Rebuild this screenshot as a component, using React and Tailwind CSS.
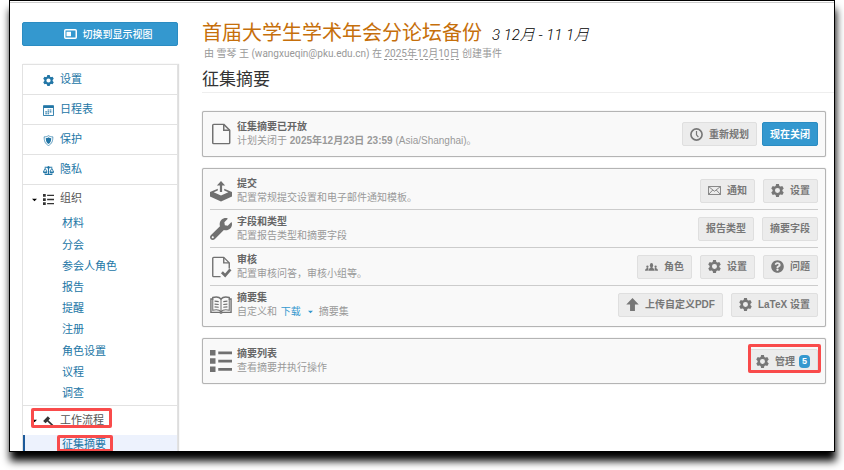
import { FaBalanceScale, FaQuestionCircle, FaWrench } from 'react-icons/fa';

const GEAR_ANGLES = [0, 60, 120, 180, 240, 300];

function GearIcon({ className }) {
  return (
    <svg viewBox="0 0 24 24" className={className} fill="none" stroke="currentColor" aria-hidden="true">
      <circle cx="12" cy="12" r="6.8" strokeWidth="4.4" />
      {GEAR_ANGLES.map((angle) => (
        <path key={angle} d="M8.4 4.5 L9.4 .2 H14.6 L15.6 4.5 Z" fill="currentColor" stroke="none" transform={`rotate(${angle} 12 12)`} />
      ))}
    </svg>
  );
}

function DisplayIcon({ className }) {
  return (
    <svg viewBox="0 0 26 20" className={className} aria-hidden="true">
      <rect x="1.5" y="1.5" width="23" height="17" rx="2" fill="none" stroke="currentColor" strokeWidth="3" />
      <rect x="5" y="5.5" width="9" height="9" fill="currentColor" />
    </svg>
  );
}

function CalendarIcon({ className }) {
  return (
    <svg viewBox="0 0 24 24" className={className} fill="none" stroke="currentColor" aria-hidden="true">
      <path d="M1 1.500H23V23H1Z" strokeWidth="2" />
      <path d="M1 4H23" strokeWidth="5" />
      <path d="M10 11H20M5 15H20M5 19H14" strokeWidth="2.200" strokeDasharray="3.500 1.300" />
    </svg>
  );
}

function ShieldIcon({ className }) {
  return (
    <svg viewBox="0 0 24 24" className={className} aria-hidden="true">
      <path d="M12 1.500C9 3.500 6 4 2.500 4C2.500 12 4 19 12 23C20 19 21.500 12 21.500 4C18 4 15 3.500 12 1.500Z" fill="none" stroke="currentColor" strokeWidth="1.500" />
      <path d="M12 5C10 6.300 8.500 6.800 6 7C6.200 12.500 7.500 17 12 19.800C16.500 17 17.800 12.500 18 7C15.500 6.800 14 6.300 12 5Z" fill="currentColor" />
    </svg>
  );
}

function ListIcon({ className }) {
  return (
    <svg viewBox="0 0 24 24" className={className} fill="currentColor" aria-hidden="true">
      <path d="M0 0H6V6H0ZM0 9H6V15H0ZM0 18H6V24H0ZM9 1.500H24V4.500H9ZM9 10.500H24V13.500H9ZM9 19.500H24V22.500H9Z" />
    </svg>
  );
}

function GavelIcon({ className }) {
  return (
    <svg viewBox="0 0 24 24" className={className} fill="none" stroke="currentColor" aria-hidden="true">
      <path d="M3 13.500L13 3" strokeWidth="7" />
      <path d="M9 9L22 21.500" strokeWidth="3.600" strokeLinecap="round" />
    </svg>
  );
}

function FileIcon({ className }) {
  return (
    <svg viewBox="0 0 22 24" className={className} fill="none" stroke="currentColor" strokeWidth="1.600" aria-hidden="true">
      <path d="M3 1.500H14L20.500 8V21.500Q20.500 22.500 19.500 22.500H3Q2 22.500 2 21.500V2.500Q2 1.500 3 1.500Z" strokeLinejoin="round" />
      <path d="M14 1.500V8H20.500" />
    </svg>
  );
}

function FileCheckIcon({ className }) {
  return (
    <svg viewBox="0 0 22 24" className={className} fill="none" stroke="currentColor" strokeWidth="1.500" aria-hidden="true">
      <path d="M10.500 22.500H3Q2 22.500 2 21.500V2.500Q2 1.500 3 1.500H14L20 7.500V13.500" strokeLinejoin="round" />
      <path d="M14 1.500V7.500H20" />
      <path d="M12 17.800L15.500 21.300L21.300 14.500" strokeWidth="3" />
    </svg>
  );
}

function SubmitIcon({ className }) {
  return (
    <svg viewBox="0 0 24 24" className={className} fill="currentColor" aria-hidden="true">
      <path d="M12 1L16.500 6H13.200V13H10.800V6H7.500Z" />
      <path d="M8.500 9.500L0 13V18L12 23.500L24 18V13L15.500 9.500V11.500L20 13.400L12 17L4 13.400L8.500 11.500Z" />
    </svg>
  );
}

function BookIcon({ className }) {
  return (
    <svg viewBox="0 0 24 20" className={className} fill="none" stroke="currentColor" strokeWidth="1.500" aria-hidden="true">
      <path d="M12 3.500C10 1 6 1 3 1.800V3.500H1V18H10.500L12 19L13.500 18H23V3.500H21V1.800C18 1 14 1 12 3.500Z" />
      <path d="M12 3.500V18M3 3.500V15.800C6 15 10 15 12 17.500C14 15 18 15 21 15.800V3.500" strokeWidth="1.100" />
      <path d="M5 5.800L9.500 6.300M5 9L9.500 9.500M5 12L9.500 12.500M19 5.800L14.500 6.300M19 9L14.500 9.500M19 12L14.500 12.500" strokeWidth="1.200" />
    </svg>
  );
}

function ClockIcon({ className }) {
  return (
    <svg viewBox="0 0 24 24" className={className} fill="none" stroke="currentColor" aria-hidden="true">
      <circle cx="12" cy="12" r="10.300" strokeWidth="3" />
      <path d="M12 5.500V12.500L15.500 17" strokeWidth="2.200" />
    </svg>
  );
}

function MailIcon({ className }) {
  return (
    <svg viewBox="0 0 26 18" className={className} fill="none" stroke="currentColor" strokeWidth="1.700" aria-hidden="true">
      <path d="M1 1H25V17H1ZM1 1L13 10.500L25 1M1 17L9.500 8M25 17L16.500 8" />
    </svg>
  );
}

function RolesIcon({ className }) {
  return (
    <svg viewBox="0 0 26 18" className={className} fill="currentColor" aria-hidden="true">
      <ellipse cx="13" cy="6.500" rx="3.200" ry="4.500" />
      <path d="M6.500 17.500C6.500 13.500 9.500 12.500 11 11.500V9H15V11.500C16.500 12.500 19.500 13.500 19.500 17.500Z" />
      <circle cx="4.800" cy="9.500" r="2.300" />
      <circle cx="21.200" cy="9.500" r="2.300" />
      <path d="M0 17.500C0 14 2 13 4 12H7L5.500 17.500ZM26 17.500C26 14 24 13 22 12H19L20.500 17.500Z" />
    </svg>
  );
}

function ArrowUpIcon({ className }) {
  return (
    <svg viewBox="0 0 24 24" className={className} fill="currentColor" aria-hidden="true">
      <path d="M12 0L23.500 12H16.500V24H7.500V12H.5Z" />
    </svg>
  );
}

function Caret({ className }) {
  return (
    <svg viewBox="0 0 6 4" className={className} fill="currentColor" aria-hidden="true">
      <path d="M0 .5H6L3 3.500Z" />
    </svg>
  );
}

const MAIN_LINKS = [
  { label: '设置', Icon: GearIcon },
  { label: '日程表', Icon: CalendarIcon },
  { label: '保护', Icon: ShieldIcon },
  { label: '隐私', Icon: FaBalanceScale },
];

const ORGANIZATION_LINKS = ['材料', '分会', '参会人角色', '报告', '提醒', '注册', '角色设置', '议程', '调查'];

const ABSTRACT_ROWS = [
  {
    title: '提交',
    description: '配置常规提交设置和电子邮件通知模板。',
    Icon: SubmitIcon,
    actions: [
      { label: '通知', Icon: MailIcon },
      { label: '设置', Icon: GearIcon },
    ],
  },
  {
    title: '字段和类型',
    description: '配置报告类型和摘要字段',
    Icon: FaWrench,
    actions: [{ label: '报告类型' }, { label: '摘要字段' }],
  },
  {
    title: '审核',
    description: '配置审核问答，审核小组等。',
    Icon: FileCheckIcon,
    actions: [
      { label: '角色', Icon: RolesIcon },
      { label: '设置', Icon: GearIcon },
      { label: '问题', Icon: FaQuestionCircle },
    ],
  },
  {
    title: '摘要集',
    description: (
      <>
        自定义和{' '}
        <a href="#download" className="mx-px text-[#3498cf]">
          下载
          <Caret className="mr-[5px] ml-[7px] inline h-1 w-[5px] align-middle" />
        </a>
        摘要集
      </>
    ),
    Icon: BookIcon,
    actions: [
      { label: '上传自定义PDF', Icon: ArrowUpIcon },
      { label: 'LaTeX 设置', Icon: GearIcon },
    ],
  },
];

function ActionButton({ label, Icon, children }) {
  return (
    <button
      type="button"
      className="flex h-6 items-center rounded-xs border border-[#dfdfdf] bg-[#ececec] px-[7px] text-[10px] font-bold whitespace-nowrap text-[#777]"
    >
      {Icon && <Icon className="mr-[6px] h-[13px] w-[13px]" />}
      {label}
      {children}
    </button>
  );
}

function Panel({ className = '', children }) {
  return (
    <section className={`rounded-xs border border-[#b4b4b4] bg-[#f9f9f9] px-[7px] shadow-[0_0_1px_#aaa] ${className}`}>
      {children}
    </section>
  );
}

function PanelRow({ title, description, Icon, className = '', children }) {
  return (
    <div className={`flex items-center ${className}`}>
      <Icon className="mr-[5px] h-[22px] w-[22px] shrink-0 text-[#707070]" />
      <div className="min-w-0 flex-1 text-[10px] leading-[14px]">
        <h3 className="font-bold text-[#666]">{title}</h3>
        <p className="text-[#999]">{description}</p>
      </div>
      {children}
    </div>
  );
}

function Sidebar() {
  return (
    <aside className="w-[156px] shrink-0 font-[Roboto,'Noto_Sans_CJK_SC',sans-serif] text-[11px] text-[#2276a6]">
      <button
        type="button"
        className="flex h-6 w-full items-center justify-center rounded-xs border border-[#2b8cc2] bg-[#3498cf] pl-4 text-[10px] font-medium text-white"
      >
        <DisplayIcon className="mr-[6px] h-[10px] w-[13px]" />
        切换到显示视图
      </button>
      <nav className="mt-[18px] border border-[#e2e2e2] shadow-[1px_0_1px_#ddd]">
        {MAIN_LINKS.map(({ label, Icon }) => (
          <a key={label} href="#menu" className="flex h-[30px] items-center border-b border-[#e2e2e2] pt-px pl-5">
            <Icon className="mr-[6px] h-[11px] w-[11px]" />
            {label}
          </a>
        ))}
        <button type="button" className="flex h-[29px] w-full items-center pl-[9px] text-[#555]">
          <Caret className="mr-[6px] h-1 w-[5px] text-black" />
          <ListIcon className="mr-[6px] h-[11px] w-[11px] text-[#333]" />
          组织
        </button>
        <ul className="grid h-48 auto-rows-fr border-b border-[#e2e2e2]">
          {ORGANIZATION_LINKS.map((label) => (
            <li key={label} className="flex items-center pl-[39px]">
              <a href="#organization">{label}</a>
            </li>
          ))}
        </ul>
        <button type="button" className="relative flex h-[29px] w-full items-center pt-px pl-[9px] text-[#555]">
          <Caret className="mr-[6px] h-1 w-[5px] text-black" />
          <GavelIcon className="mr-[6px] h-[11px] w-[11px] text-[#333]" />
          工作流程
          <span className="absolute top-[2px] left-2 h-5 w-[81px] rounded-xs border-3 border-[#f94b4b]" />
        </button>
        <a href="#abstracts" className="relative flex h-[21px] items-center border-l-2 border-[#1d5a9a] bg-[#edf2fd] pl-[37px]">
          征集摘要
          <span className="absolute top-0 left-8 h-[17px] w-14 rounded-xs border-3 border-[#f94b4b]" />
        </a>
      </nav>
    </aside>
  );
}

export default function App() {
  return (
    <div className="flex h-screen flex-col bg-white px-[9px] pb-[18px] font-['Liberation_Sans','Noto_Sans_CJK_SC',sans-serif]" lang="zh-CN">
      <div className="flex min-h-0 flex-1 flex-col overflow-hidden border border-black bg-white shadow-[1px_9px_8px_#000]">
        <div className="mt-px h-px shrink-0 bg-[#ccc]" />
        <div className="flex min-h-0 flex-1 items-start pt-[19px] pl-3">
          <Sidebar />
          <main className="ml-6 min-w-0 flex-1">
            <header className="font-[Roboto,'Noto_Sans_CJK_SC',sans-serif]">
              <h1 className="text-xl leading-[22px] text-[#c66f0b]">
                首届大学生学术年会分论坛备份
                <span className="ml-[10px] text-[15px] font-light text-black italic">3 12月 - 11 1月</span>
              </h1>
              <p className="ml-[2px] text-[10px] leading-4 text-[#999]">
                由 雪琴 王 (wangxueqin@pku.edu.cn) 在{' '}
                <span className="border-b border-dashed border-[#999]">2025年12月10日</span> 创建事件
              </p>
              <h2 className="mt-[6px] border-b border-[#eee] pb-[2px] text-[17px] leading-[22px] text-[#333]">征集摘要</h2>
            </header>

            <div className="mt-[18px] mr-2 flex flex-col gap-[11px]">
              <Panel>
                <PanelRow
                  Icon={FileIcon}
                  title="征集摘要已开放"
                  description={
                    <>
                      计划关闭于 <strong>2025年12月23日 23:59</strong> (Asia/Shanghai)。
                    </>
                  }
                  className="h-11"
                >
                  <div className="flex gap-[5px]">
                    <ActionButton label="重新规划" Icon={ClockIcon} />
                    <button type="button" className="h-6 rounded-xs border border-[#2b8cc2] bg-[#3498cf] px-[7px] text-[10px] font-bold text-white">
                      现在关闭
                    </button>
                  </div>
                </PanelRow>
              </Panel>

              <Panel className="py-[3px]">
                {ABSTRACT_ROWS.map(({ actions, ...row }) => (
                  <PanelRow key={row.title} {...row} className="h-[38px] border-b border-[#ccc] last:h-[37px] last:border-b-0">
                    <div className="flex gap-2">
                      {actions.map((action) => (
                        <ActionButton key={action.label} {...action} />
                      ))}
                    </div>
                  </PanelRow>
                ))}
              </Panel>

              <Panel>
                <PanelRow Icon={ListIcon} title="摘要列表" description="查看摘要并执行操作" className="h-11">
                  <div className="relative">
                    <ActionButton label="管理" Icon={GearIcon}>
                      <span className="ml-1 rounded-sm bg-[#3498cf] px-[3px] text-[9px] leading-[13px] text-white">5</span>
                    </ActionButton>
                    <span className="absolute -top-[5px] -right-[3px] bottom-0 left-0 rounded-xs border-3 border-[#f94b4b]" />
                  </div>
                </PanelRow>
              </Panel>
            </div>
          </main>
        </div>
      </div>
    </div>
  );
}
